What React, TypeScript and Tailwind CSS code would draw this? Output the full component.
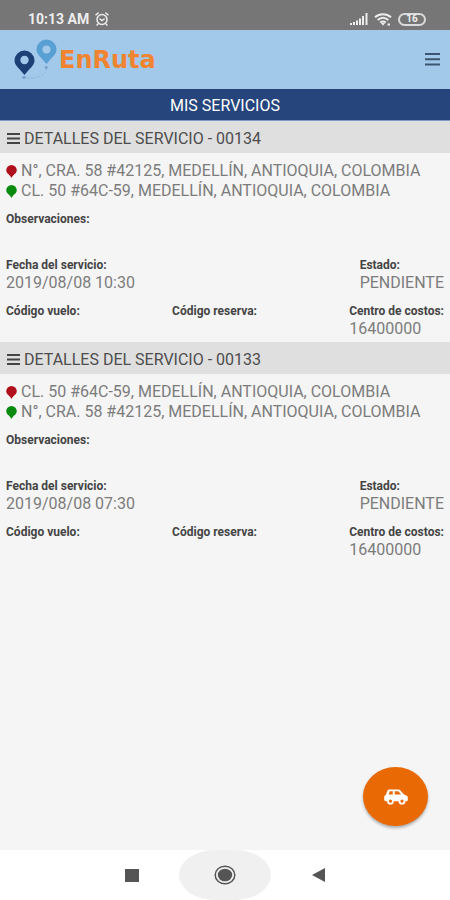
import type { ReactNode } from "react";

type Service = {
  id: string;
  from: string;
  to: string;
  date: string;
  status: string;
  costCenter: string;
};

const services: Service[] = [
  {
    id: "00134",
    from: "N°, CRA. 58 #42125, MEDELLÍN, ANTIOQUIA, COLOMBIA",
    to: "CL. 50 #64C-59, MEDELLÍN, ANTIOQUIA, COLOMBIA",
    date: "2019/08/08 10:30",
    status: "PENDIENTE",
    costCenter: "16400000",
  },
  {
    id: "00133",
    from: "CL. 50 #64C-59, MEDELLÍN, ANTIOQUIA, COLOMBIA",
    to: "N°, CRA. 58 #42125, MEDELLÍN, ANTIOQUIA, COLOMBIA",
    date: "2019/08/08 07:30",
    status: "PENDIENTE",
    costCenter: "16400000",
  },
];

function StatusBar() {
  return (
    <div className="flex h-[30px] items-center justify-between bg-[#767676] pt-2 pr-6 pl-7 text-[#ededed]">
      <div className="flex items-center gap-1.5">
        <span className="text-sm leading-4 font-bold">10:13 AM</span>
        <svg width="14" height="14" viewBox="0 0 14 14" fill="none" stroke="currentColor" strokeWidth="1.5" strokeLinecap="round">
          <circle cx="7" cy="7.5" r="5" />
          <path d="M1 2.8 3.2 1M13 2.8 10.8 1M5 7l2 1.5L9.2 7M3 12l-1 1M11 12l1 1" />
        </svg>
      </div>
      <div className="flex items-center gap-1.5">
        <svg width="18" height="12" viewBox="0 0 18 12" fill="currentColor">
          <path d="M0 10h2v2H0zM3 9h2v3H3zM6 7.5h2V12H6zM9 5.5h2V12H9zM12 3h2v9h-2zM15.5 0h2v12h-2z" />
        </svg>
        <svg width="18" height="13" viewBox="0 0 18 13" fill="none" stroke="currentColor" strokeWidth="2">
          <path d="M1 4.2c4.6-4 11.4-4 16 0M3.7 7c3.2-2.700 7.400-2.700 10.600 0M6.200 9.500c1.800-1.400 3.800-1.400 5.600 0" />
          <path d="M7 10h4l-2 2.800z" fill="currentColor" stroke="none" />
          <path d="M13.500 11.500h2.500" />
        </svg>
        <span className="flex h-[13px] w-7 items-center justify-center rounded-full border-2 border-[#dadada] text-[10px] leading-none font-bold">
          16
        </span>
      </div>
    </div>
  );
}

function Logo() {
  return (
    <div className="flex items-center gap-0.5">
      <svg width="43" height="42" viewBox="0 0 43 42">
        <path
          d="M10 38.500c9 1.500 18-.5 21-4.500 1.500-2 1.500-4 1-7"
          fill="none"
          stroke="#8db3d8"
          strokeWidth="1"
          strokeDasharray="2 1.500"
        />
        <path d="M8.500 37.500h3v2h-3zM31 27.500h2.500v2H31z" fill="#6c93bd" />
        <path
          d="M32.500.5a10 10 0 0 0-10 10c0 5 5 8 10 14.500 5-6.500 10-9.500 10-14.500a10 10 0 0 0-10-10z"
          fill="#589fd3"
        />
        <circle cx="32.500" cy="10.500" r="4" fill="#a2c8ea" />
        <path
          d="M10.500 11.500a10 10 0 0 0-10 10c0 5 5 8 10 14.500 5-6.500 10-9.500 10-14.500a10 10 0 0 0-10-10z"
          fill="#1d4077"
        />
        <circle cx="10.500" cy="21" r="4.200" fill="#a2c8ea" />
      </svg>
      <span className="font-['DejaVu_Sans',sans-serif] text-2xl leading-8 font-bold text-[#f08430]">EnRuta</span>
    </div>
  );
}

function Pin({ className }: { className: string }) {
  return (
    <svg width="11" height="13" viewBox="0 0 11 13" className={className} fill="currentColor">
      <path d="M5.500 0A5.300 5.300 0 0 0 .2 5.200c0 3.100 3.600 4.300 5.300 7.800 1.700-3.500 5.300-4.700 5.300-7.800A5.300 5.300 0 0 0 5.500 0z" />
    </svg>
  );
}

function Field({ label, children }: { label: string; children?: ReactNode }) {
  return (
    <div>
      <dt className="text-xs leading-4 font-bold text-[#444444]">{label}</dt>
      <dd className="h-5 text-base leading-5 text-[#7c7c7c]">{children}</dd>
    </div>
  );
}

function ServiceCard({ service }: { service: Service }) {
  return (
    <article>
      <h2 className="flex h-8 items-center gap-1 bg-[#dfdfdf] px-1.5 pt-1 text-base font-normal text-[#4d4d4d]">
        <svg width="14" height="12" viewBox="0 0 14 12" fill="#444444">
          <path d="M1 0h13v2H1zM1 4.500h13v2H1zM1 9h13v2H1z" />
        </svg>
        DETALLES DEL SERVICIO - {service.id}
      </h2>
      <div className="px-1.5 pt-2 pb-[3px]">
        <ul className="text-base leading-5 text-[#7c7c7c]">
          <li className="flex items-center gap-1">
            <Pin className="shrink-0 text-[#b0101c]" />
            {service.from}
          </li>
          <li className="flex items-center gap-1">
            <Pin className="shrink-0 text-[#0a8a0e]" />
            {service.to}
          </li>
        </ul>
        <dl className="mt-2.5 flex flex-col gap-2.5">
          <Field label="Observaciones:" />
          <div className="flex justify-between">
            <Field label="Fecha del servicio:">{service.date}</Field>
            <Field label="Estado:">{service.status}</Field>
          </div>
          <div className="flex justify-between">
            <Field label="Código vuelo:" />
            <Field label="Código reserva:" />
            <Field label="Centro de costos:">{service.costCenter}</Field>
          </div>
        </dl>
      </div>
    </article>
  );
}

function NavBar() {
  return (
    <nav className="flex h-[50px] items-center justify-center bg-white text-[#555555]">
      <button aria-label="Recientes" className="flex w-[94px] justify-center">
        <svg width="14" height="13" viewBox="0 0 14 13">
          <path d="M0 0h14v13H0z" fill="currentColor" />
        </svg>
      </button>
      <button aria-label="Inicio" className="flex h-[50px] w-[92px] items-center justify-center rounded-[40px/28px] bg-[#f0f0f0]">
        <svg width="22" height="20" viewBox="0 0 22 20">
          <ellipse cx="11" cy="10" rx="9.800" ry="8.800" fill="none" stroke="currentColor" strokeWidth="1.500" />
          <ellipse cx="11" cy="10" rx="7.200" ry="6.300" fill="currentColor" />
        </svg>
      </button>
      <button aria-label="Atrás" className="flex w-[94px] justify-center">
        <svg width="13" height="14" viewBox="0 0 13 14">
          <path d="M13 0v14L0 7z" fill="currentColor" />
        </svg>
      </button>
    </nav>
  );
}

export default function App() {
  return (
    <div className="flex min-h-screen flex-col bg-[#f5f5f5] font-[Roboto,sans-serif]">
      <StatusBar />
      <header className="flex h-[59px] items-center justify-between bg-[#a2c8ea] pr-2.5 pl-3.5">
        <Logo />
        <button aria-label="Menú">
          <svg width="15" height="13" viewBox="0 0 15 13" fill="#3c566f">
            <path d="M0 0h15v2H0zM0 5.200h15v2H0zM0 10.500h15v2H0z" />
          </svg>
        </button>
      </header>
      <h1 className="flex h-8 items-center justify-center border-b border-[#7d9cc6] bg-[#25457c] pt-0.5 text-base font-normal text-white">
        MIS SERVICIOS
      </h1>

      <main className="relative grow">
        {services.map((service) => (
          <ServiceCard key={service.id} service={service} />
        ))}

        <button
          aria-label="Nuevo servicio"
          className="absolute right-[22px] bottom-6 flex h-[59px] w-[65px] items-center justify-center rounded-[50%] bg-[#e96a05] shadow-[0_2px_3px_rgba(0,0,0,0.3)]"
        >
          <svg width="24" height="16" viewBox="0 0 24 16">
            <path
              d="M5.500.5h8.700c.9 0 1.600.3 2.200.9L20 5.600l2.300.9c.9.400 1.500 1.200 1.500 2.200v2c0 .9-.6 1.600-1.500 1.600H2c-1 0-1.800-.7-1.800-1.700V8c0-1 .7-1.800 1.600-2.100L3.300 2C3.700 1 4.500.5 5.500.5z"
              fill="#fff"
            />
            <path d="M6 2.300h2.800v3.300H4.700L5.500 2.700zM10.700 2.300h3.200c.4 0 .7.200.9.500l2.400 2.800h-6.500z" fill="#e96a05" />
            <circle cx="6.500" cy="12.200" r="2.500" fill="#e96a05" stroke="#fff" strokeWidth="1.800" />
            <circle cx="18" cy="12.200" r="2.500" fill="#e96a05" stroke="#fff" strokeWidth="1.800" />
          </svg>
        </button>
      </main>

      <NavBar />
    </div>
  );
}
